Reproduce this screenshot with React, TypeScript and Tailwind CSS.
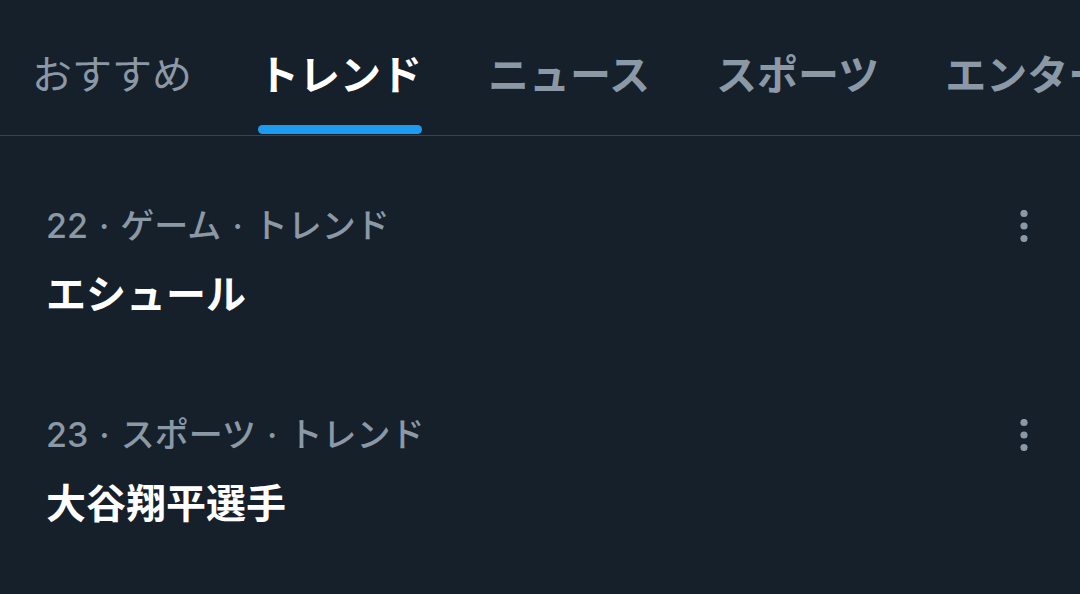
import React from "react";

const tabs = [
  { label: "おすすめ", active: false, bold: false },
  { label: "トレンド", active: true, bold: true },
  { label: "ニュース", active: false, bold: true },
  { label: "スポーツ", active: false, bold: true },
  { label: "エンターテイメント", active: false, bold: true },
];

const trends = [
  { meta: "22 · ゲーム · トレンド", title: "エシュール" },
  { meta: "23 · スポーツ · トレンド", title: "大谷翔平選手" },
];

const MoreIcon = () => (
  <svg viewBox="0 0 24 32" className="h-[32px] w-[24px] shrink-0 fill-[#8b98a5]">
    <circle cx="12" cy="3.5" r="3.6" />
    <circle cx="12" cy="16" r="3.6" />
    <circle cx="12" cy="28.5" r="3.6" />
  </svg>
);

export default function App() {
  return (
    <div
      className="h-[594px] w-[1080px] overflow-hidden bg-[#15202b]"
      style={{ fontFamily: '"Noto Sans CJK JP", "Noto Sans", sans-serif' }}
    >
      <div className="flex h-[136px] gap-[66px] overflow-hidden border-b border-[#38444d] pl-[32px]">
        {tabs.map((t) => (
          <div key={t.label} className="flex shrink-0 flex-col items-stretch pt-[52px]">
            <span
              className={`whitespace-nowrap leading-[40px] ${
                t.bold ? "text-[41px] font-bold" : "text-[40px] font-normal"
              } ${t.active ? "text-white" : "text-[#8b98a5]"}`}
            >
              {t.label}
            </span>
            {t.active && <div className="mt-[33px] h-[9px] rounded-full bg-[#1d9bf0]" />}
          </div>
        ))}
      </div>
      {trends.map((tr) => (
        <div key={tr.title} className="flex items-start justify-between pb-[33px] pl-[46px] pr-[44px] pt-[74px]">
          <div className="flex flex-col">
            <span
              className="text-[34px] font-medium leading-[32px] text-[#8b98a5] [word-spacing:2px]"
              style={{ fontFamily: 'Inter, "Noto Sans CJK JP", sans-serif' }}
            >
              {tr.meta}
            </span>
            <span className="mt-[30px] text-[40px] font-bold leading-[40px] text-white">{tr.title}</span>
          </div>
          <MoreIcon />
        </div>
      ))}
    </div>
  );
}
